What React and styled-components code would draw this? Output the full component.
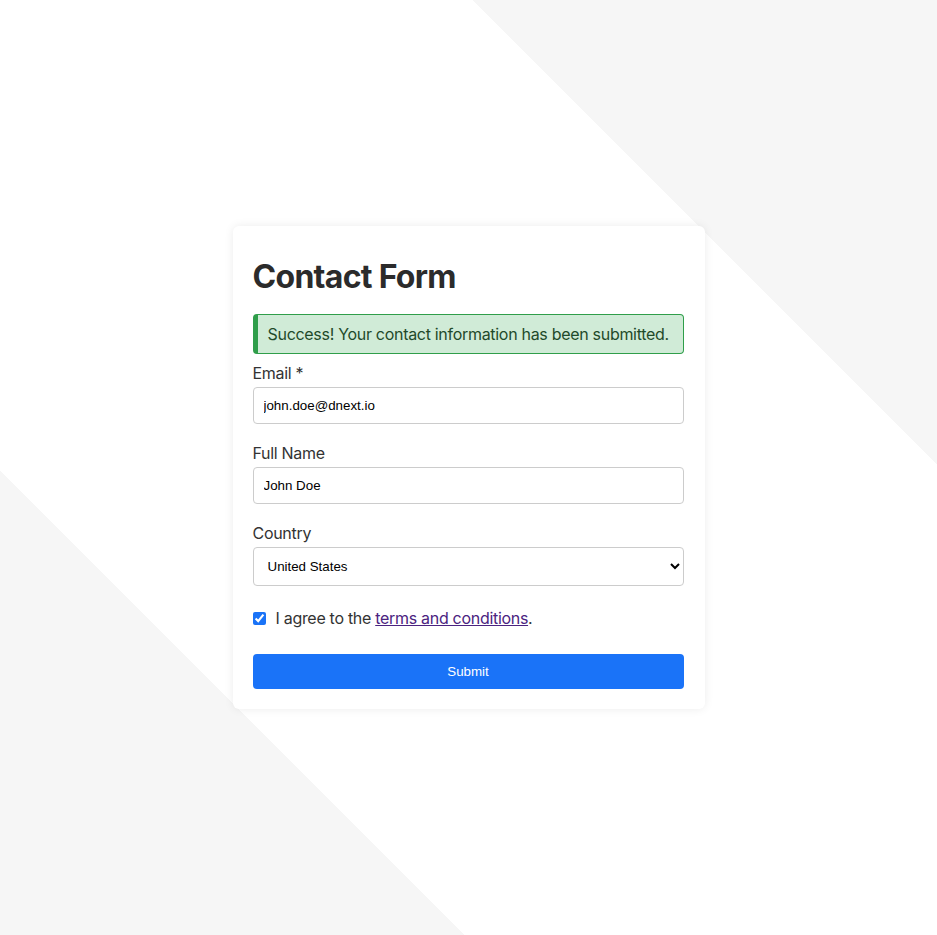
import React, { useState } from "react";
import styled, { createGlobalStyle } from "styled-components";

const GlobalStyle = createGlobalStyle`
  * {
    box-sizing: border-box;
  }

  body {
    margin: 0;
    font-family: Inter, "Liberation Sans", Arial, sans-serif;
    color: #333333;
  }
`;

const Page = styled.div`
  min-height: 100vh;
  display: flex;
  align-items: center;
  justify-content: center;
  background: linear-gradient(
    45deg,
    #f6f6f6 24.8%,
    #ffffff 24.8%,
    #ffffff 75.2%,
    #f6f6f6 75.2%
  );
`;

const Card = styled.div`
  width: 472px;
  padding: 20px 21px 20px 20px;
  background-color: #ffffff;
  border-radius: 6px;
  box-shadow: 0 0 10px rgba(0, 0, 0, 0.08);
`;

const Title = styled.h1`
  margin: 12px 0 17px;
  font-size: 32px;
  font-weight: 700;
  line-height: 1.2;
  letter-spacing: -0.7px;
  color: #2b2b2b;
`;

const Alert = styled.div`
  margin-bottom: 10px;
  padding: 10px;
  background-color: #d0ebd7;
  border: 1px solid #2f9e4a;
  border-left-width: 5px;
  border-radius: 4px;
  font-size: 16px;
  line-height: 18px;
  letter-spacing: -0.3px;
  white-space: nowrap;
  color: #1f4a2a;
`;

const Field = styled.div`
  margin-bottom: ${(props) => (props.$last ? "23px" : "20px")};
`;

const Label = styled.label`
  display: block;
  margin-bottom: 4px;
  font-size: 16px;
  line-height: 19px;
  letter-spacing: -0.3px;
  color: #333333;
`;

const Input = styled.input`
  display: block;
  width: 100%;
  height: 37px;
  padding: 0 10px;
  border: 1px solid #cccccc;
  border-radius: 4px;
  font-family: "Liberation Sans", Arial, sans-serif;
  font-size: 13.33px;
  color: #000000;
  background-color: #ffffff;
  outline: none;
`;

const Select = styled.select`
  display: block;
  width: 100%;
  height: 39px;
  padding: 0 10px;
  border: 1px solid #cccccc;
  border-radius: 4px;
  font-family: "Liberation Sans", Arial, sans-serif;
  font-size: 13.33px;
  color: #000000;
  background-color: #ffffff;
  outline: none;
`;

const CheckRow = styled.label`
  display: flex;
  align-items: center;
  gap: 10px;
  margin-bottom: 26px;
  font-size: 16px;
  line-height: 19px;
  letter-spacing: -0.3px;
  color: #333333;

  input {
    width: 13px;
    height: 13px;
    margin: 0;
    accent-color: #1a73f7;
  }

  a {
    color: #4b2380;
  }
`;

const SubmitButton = styled.button`
  display: block;
  width: 100%;
  height: 35px;
  border: none;
  border-radius: 4px;
  background-color: #1a73f8;
  font-family: "Liberation Sans", Arial, sans-serif;
  font-size: 13.33px;
  color: #ffffff;
  cursor: pointer;
`;

function App() {
  const [email, setEmail] = useState("john.doe@dnext.io");
  const [name, setName] = useState("John Doe");
  const [country, setCountry] = useState("US");
  const [agree, setAgree] = useState(true);

  return (
    <Page>
      <GlobalStyle />
      <Card>
        <Title>Contact Form</Title>
        <Alert>Success! Your contact information has been submitted.</Alert>
        <form onSubmit={(e) => e.preventDefault()}>
          <Field>
            <Label htmlFor="email">Email *</Label>
            <Input
              id="email"
              type="email"
              value={email}
              onChange={(e) => setEmail(e.target.value)}
            />
          </Field>
          <Field>
            <Label htmlFor="name">Full Name</Label>
            <Input
              id="name"
              type="text"
              value={name}
              onChange={(e) => setName(e.target.value)}
            />
          </Field>
          <Field $last>
            <Label htmlFor="country">Country</Label>
            <Select
              id="country"
              value={country}
              onChange={(e) => setCountry(e.target.value)}
            >
              <option value="US">United States</option>
              <option value="CA">Canada</option>
              <option value="GB">United Kingdom</option>
            </Select>
          </Field>
          <CheckRow>
            <input
              type="checkbox"
              checked={agree}
              onChange={(e) => setAgree(e.target.checked)}
            />
            <span>
              I agree to the <a href="#terms">terms and conditions</a>.
            </span>
          </CheckRow>
          <SubmitButton type="submit">Submit</SubmitButton>
        </form>
      </Card>
    </Page>
  );
}

export default App;
